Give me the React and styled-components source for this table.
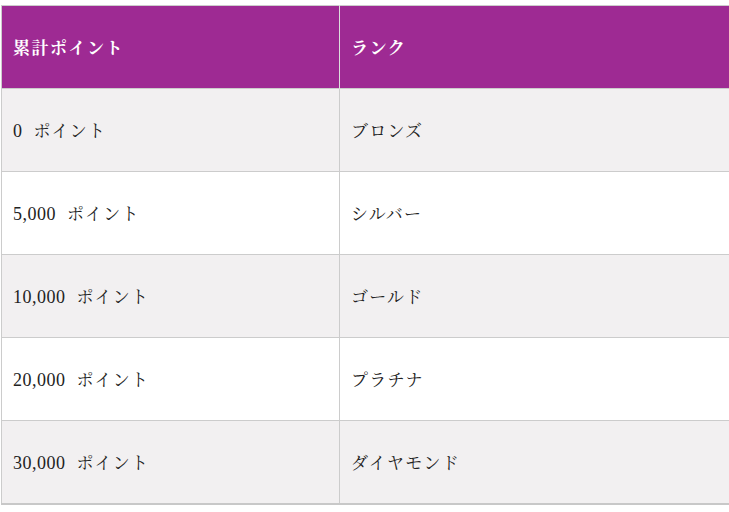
import React from 'react';
import styled, { createGlobalStyle } from 'styled-components';

const GlobalStyle = createGlobalStyle`
  body {
    margin: 0;
    background: #ffffff;
    font-family: "Liberation Serif", "Noto Serif CJK JP", "Noto Sans CJK JP", serif;
  }
`;

const Page = styled.div`
  padding: 5px 0 0 1px;
  width: 760px;
  overflow: hidden;
`;

const Table = styled.table`
  width: 760px;
  border-collapse: collapse;
  border: 1px solid #cccccc;
  border-bottom: 2px solid #c8c8c8;
  table-layout: fixed;
  font-size: 17px;
  color: #222222;
`;

const HeadCell = styled.th`
  background: #9e2a93;
  color: #ffffff;
  font-weight: 700;
  text-align: left;
  height: 80px;
  padding: 0 11px 2px;
  border-left: 1px solid #dddddd;
  letter-spacing: 1.5px;
  &:first-child {
    width: 315px;
    border-left: none;
  }
`;

const Row = styled.tr`
  background: ${props => (props.striped ? '#f2f0f1' : '#ffffff')};
`;

const Cell = styled.td`
  height: 80px;
  padding: 0 11px 2px;
  border-top: 1px solid #cccccc;
  border-left: 1px solid #cccccc;
  letter-spacing: 1.2px;
  &:first-child {
    border-left: none;
  }
`;

const Number = styled.span`
  font-size: 18px;
  letter-spacing: 0.5px;
`;

const ranks = [
  { points: '0', name: 'ブロンズ' },
  { points: '5,000', name: 'シルバー' },
  { points: '10,000', name: 'ゴールド' },
  { points: '20,000', name: 'プラチナ' },
  { points: '30,000', name: 'ダイヤモンド' },
];

export default function App() {
  return (
    <Page>
      <GlobalStyle />
      <Table>
        <thead>
          <tr>
            <HeadCell>累計ポイント</HeadCell>
            <HeadCell>ランク</HeadCell>
          </tr>
        </thead>
        <tbody>
          {ranks.map((r, i) => (
            <Row key={r.name} striped={i % 2 === 0}>
              <Cell><Number>{r.points}</Number>&nbsp; ポイント</Cell>
              <Cell>{r.name}</Cell>
            </Row>
          ))}
        </tbody>
      </Table>
    </Page>
  );
}
